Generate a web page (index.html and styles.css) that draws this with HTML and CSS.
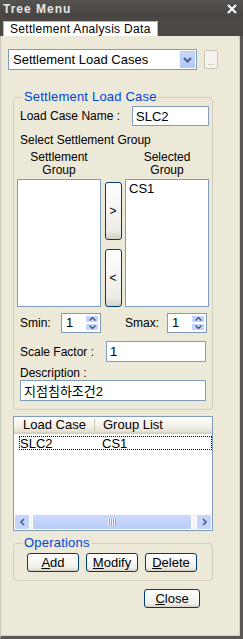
FILE: index.html
```html
<!DOCTYPE html>
<html lang="ko">
<head>
    <meta charset="UTF-8">
    <meta name="viewport" content="width=device-width, initial-scale=1.0">
    <title>Tree Menu</title>
    <link rel="stylesheet" href="styles.css">
</head>
<body>
    <div class="window">
        <div class="titlebar">
            <span class="title">Tree Menu</span>
            <svg class="close" width="10" height="10" viewBox="0 0 10 10">
                <path d="M1 1 L9 9 M9 1 L1 9" stroke="#fff" stroke-width="2"/>
            </svg>
        </div>

        <div class="tabstrip">
            <div class="tab">Settlement Analysis Data</div>
        </div>

        <div class="panel">
            <div class="select-row">
                <div class="combo">
                    <span class="combo-text">Settlement Load Cases</span>
                    <span class="combo-btn">
                        <svg width="9" height="6" viewBox="0 0 9 6">
                            <path d="M1 1 L4.5 4.5 L8 1" fill="none" stroke="#4d6185" stroke-width="2"/>
                        </svg>
                    </span>
                </div>
                <button class="btn-more">...</button>
            </div>

            <fieldset class="group group-case">
                <legend>Settlement Load Case</legend>

                <div class="row row-name">
                    <span class="label">Load Case Name :</span>
                    <div class="field field-name">SLC2</div>
                </div>

                <div class="label label-select">Select Settlement Group</div>

                <div class="col-heads">
                    <div class="col-head">Settlement<br>Group</div>
                    <div class="col-gap"></div>
                    <div class="col-head">Selected<br>Group</div>
                </div>

                <div class="lists">
                    <div class="listbox"></div>
                    <div class="move-btns">
                        <button class="btn-move">&gt;</button>
                        <button class="btn-move">&lt;</button>
                    </div>
                    <div class="listbox">
                        <div class="list-item">CS1</div>
                    </div>
                </div>

                <div class="row row-spin">
                    <span class="label label-smin">Smin:</span>
                    <div class="spin">
                        <span class="spin-val">1</span>
                        <span class="spin-btns">
                            <span class="spin-up"><svg width="7" height="4" viewBox="0 0 7 4"><path d="M0.5 3.5 L3.5 0.5 L6.5 3.5" fill="none" stroke="#4d6185" stroke-width="1.5"/></svg></span>
                            <span class="spin-down"><svg width="7" height="4" viewBox="0 0 7 4"><path d="M0.5 0.5 L3.5 3.5 L6.5 0.5" fill="none" stroke="#4d6185" stroke-width="1.5"/></svg></span>
                        </span>
                    </div>
                    <span class="label label-smax">Smax:</span>
                    <div class="spin">
                        <span class="spin-val">1</span>
                        <span class="spin-btns">
                            <span class="spin-up"><svg width="7" height="4" viewBox="0 0 7 4"><path d="M0.5 3.5 L3.5 0.5 L6.5 3.5" fill="none" stroke="#4d6185" stroke-width="1.5"/></svg></span>
                            <span class="spin-down"><svg width="7" height="4" viewBox="0 0 7 4"><path d="M0.5 0.5 L3.5 3.5 L6.5 0.5" fill="none" stroke="#4d6185" stroke-width="1.5"/></svg></span>
                        </span>
                    </div>
                </div>

                <div class="row row-scale">
                    <span class="label">Scale Factor :</span>
                    <div class="field field-scale">1</div>
                </div>

                <div class="label label-desc">Description :</div>
                <div class="field field-desc">지점침하조건2</div>
            </fieldset>

            <div class="listview">
                <div class="lv-head">
                    <span class="lv-col lv-col1">Load Case</span>
                    <span class="lv-col lv-col2">Group List</span>
                </div>
                <div class="lv-row">
                    <span class="lv-cell lv-cell1">SLC2</span>
                    <span class="lv-cell">CS1</span>
                </div>
                <div class="lv-body"></div>
                <div class="hscroll">
                    <span class="sb-btn">
                        <svg width="5" height="8" viewBox="0 0 5 8"><path d="M4 1 L1 4 L4 7" fill="none" stroke="#4d6185" stroke-width="1.6"/></svg>
                    </span>
                    <span class="sb-thumb"><span class="grip"></span></span>
                    <span class="sb-btn">
                        <svg width="5" height="8" viewBox="0 0 5 8"><path d="M1 1 L4 4 L1 7" fill="none" stroke="#4d6185" stroke-width="1.6"/></svg>
                    </span>
                </div>
            </div>

            <fieldset class="group group-ops">
                <legend>Operations</legend>
                <div class="ops">
                    <button class="btn"><u>A</u>dd</button>
                    <button class="btn"><u>M</u>odify</button>
                    <button class="btn"><u>D</u>elete</button>
                </div>
            </fieldset>

            <div class="footer">
                <button class="btn btn-close"><u>C</u>lose</button>
            </div>
        </div>
    </div>
</body>
</html>
```

FILE: styles.css
```css
:root {
    --face: #ece9d8;
    --frame: #4a4744;
    --field-border: #7f9db9;
    --btn-border: #003c74;
    --legend: #0046d5;
    --scroll: #c4d4fb;
}

* {
    box-sizing: border-box;
}

body {
    margin: 0;
    font-family: 'Liberation Sans', 'Noto Sans CJK KR', sans-serif;
    font-size: 12px;
    color: #000;
    background: var(--frame);
}

.window {
    width: 243px;
    height: 639px;
    display: flex;
    flex-direction: column;
}

.titlebar {
    height: 17px;
    background: linear-gradient(#55524f, #474441);
    display: flex;
    align-items: center;
    justify-content: space-between;
    padding: 0 6px 0 3px;
}

.title {
    color: #e6e6e6;
    font-weight: bold;
    font-size: 12px;
    letter-spacing: 1px;
}

.tabstrip {
    height: 19px;
    background: var(--frame);
    display: flex;
    align-items: flex-end;
    padding-left: 3px;
}

.tab {
    height: 15px;
    background: #fff;
    border: 1px solid #b9b7ae;
    border-bottom: none;
    padding: 0 5px 0 6px;
    line-height: 14px;
    letter-spacing: 0.3px;
    width: 155px;
}

.panel {
    flex: 1;
    background: var(--face);
    border-left: 1px solid #c8c6bc;
    border-right: 3px solid #5a5754;
    border-bottom: 3px solid #5a5754;
    box-shadow: inset -1px -1px 0 #d0cec4;
    padding: 13px 0 0 7px;
    display: flex;
    flex-direction: column;
}

/* combo row */
.select-row {
    display: flex;
    align-items: center;
    height: 21px;
}

.combo {
    width: 189px;
    height: 21px;
    background: #fff;
    border: 1px solid var(--field-border);
    display: flex;
    align-items: center;
    justify-content: space-between;
    padding: 0 1px 0 4px;
    font-size: 13px;
}

.combo-btn {
    width: 15px;
    height: 17px;
    background: linear-gradient(#c9d8fc, #b3c8f5);
    border: 1px solid #b8cbf6;
    display: flex;
    align-items: center;
    justify-content: center;
}

.btn-more {
    margin-left: 7px;
    width: 14px;
    height: 19px;
    padding: 0;
    border: 1px solid #c9c7ba;
    border-radius: 2px;
    background: #f4f3ee;
    color: #aca899;
    font-family: inherit;
    font-size: 9px;
    line-height: 22px;
}

/* group boxes */
.group {
    margin: 20px 0 0 5px;
    width: 200px;
    border: 1px solid #d0d0bf;
    border-radius: 4px;
    padding: 2px 3px 8px 3px;
}

.group legend {
    color: var(--legend);
    font-size: 13px;
    line-height: 14px;
    padding: 0 1px;
    margin-left: 6px;
    letter-spacing: 0.2px;
}

.row {
    display: flex;
    align-items: center;
}

.label {
    margin-left: 3px;
}

.field {
    background: #fff;
    border: 1px solid var(--field-border);
    padding: 0 3px;
    display: flex;
    align-items: center;
}

.row-name {
    height: 20px;
}

.field-name {
    margin-left: auto;
    width: 77px;
    height: 20px;
    font-size: 13px;
}

.label-select {
    margin-top: 7px;
    line-height: 14px;
}

.col-heads {
    display: flex;
    margin-top: 4px;
    text-align: center;
    line-height: 13px;
}

.col-head {
    width: 84px;
}

.col-gap {
    width: 24px;
}

.lists {
    display: flex;
    margin-top: 2px;
    height: 128px;
}

.listbox {
    width: 84px;
    height: 128px;
    background: #fff;
    border: 1px solid var(--field-border);
}

.list-item {
    padding: 1px 3px;
    font-size: 13px;
}

.move-btns {
    width: 24px;
    display: flex;
    flex-direction: column;
    align-items: center;
    padding-top: 3px;
    gap: 9px;
}

.btn-move {
    width: 17px;
    height: 58px;
    padding: 0;
    border: 1px solid var(--btn-border);
    border-radius: 3px;
    background: linear-gradient(#fff, #ecebe6 85%, #d6d0c5);
    font-family: inherit;
    font-size: 12px;
}

.row-spin {
    margin-top: 6px;
    height: 20px;
}

.label-smin {
    width: 41px;
}

.label-smax {
    margin-left: 24px;
    width: 42px;
}

.spin {
    width: 40px;
    height: 20px;
    background: #fff;
    border: 1px solid var(--field-border);
    display: flex;
    justify-content: space-between;
    padding: 1px 1px 1px 4px;
    font-size: 13px;
}

.spin-btns {
    width: 14px;
    display: flex;
    flex-direction: column;
}

.spin-up,
.spin-down {
    flex: 1;
    background: var(--scroll);
    border: 1px solid #fff;
    display: flex;
    align-items: center;
    justify-content: center;
}

.row-scale {
    margin-top: 8px;
    height: 21px;
}

.field-scale {
    margin-left: auto;
    margin-right: 3px;
    width: 100px;
    height: 21px;
    font-size: 13px;
}

.label-desc {
    margin-top: 4px;
    line-height: 14px;
}

.field-desc {
    margin: 0 3px;
    height: 21px;
    font-size: 13px;
}

/* list view */
.listview {
    margin: 6px 0 0 5px;
    width: 200px;
    height: 115px;
    background: #fff;
    border: 1px solid var(--field-border);
    display: flex;
    flex-direction: column;
}

.lv-head {
    height: 17px;
    background: linear-gradient(#fff, #f1efe2 70%, #e2ded0);
    border-bottom: 2px solid #d6d2c2;
    display: flex;
    align-items: center;
}

.lv-col {
    font-size: 13px;
}

.lv-col1 {
    width: 81px;
    padding-left: 9px;
    border-right: 1px solid #c7c5b2;
    line-height: 12px;
}

.lv-col2 {
    padding-left: 8px;
}

.lv-row {
    margin: 2px 0 0 5px;
    height: 14px;
    border: 1px dotted #000;
    display: flex;
    align-items: center;
    font-size: 13px;
}

.lv-cell1 {
    width: 82px;
}

.lv-body {
    flex: 1;
}

.hscroll {
    height: 16px;
    display: flex;
    gap: 2px;
    background: #f6f5f0;
}

.sb-btn {
    width: 16px;
    background: var(--scroll);
    border: 1px solid #fff;
    border-radius: 2px;
    display: flex;
    align-items: center;
    justify-content: center;
}

.sb-thumb {
    flex: 1;
    background: linear-gradient(#cbdafc, #b9cdf8);
    border: 1px solid #fff;
    border-radius: 2px;
    margin-right: 2px;
    display: flex;
    align-items: center;
    justify-content: center;
}

.grip {
    width: 8px;
    height: 7px;
    background: repeating-linear-gradient(90deg, #eef3ff 0 1px, #8ca5dc 1px 2px);
}

/* operations */
.group-ops {
    margin-top: 5px;
    padding: 3px 3px 8px 3px;
}

.ops {
    display: flex;
    gap: 7px;
    padding-left: 10px;
}

.btn {
    width: 52px;
    height: 19px;
    padding: 0;
    border: 1px solid var(--btn-border);
    border-radius: 3px;
    background: linear-gradient(#fff, #f0efea 80%, #d6d0c5);
    font-family: inherit;
    font-size: 13px;
    color: #000;
}

.footer {
    display: flex;
    justify-content: flex-end;
    padding-right: 40px;
    margin-top: 8px;
}

.btn-close {
    width: 56px;
}
```
